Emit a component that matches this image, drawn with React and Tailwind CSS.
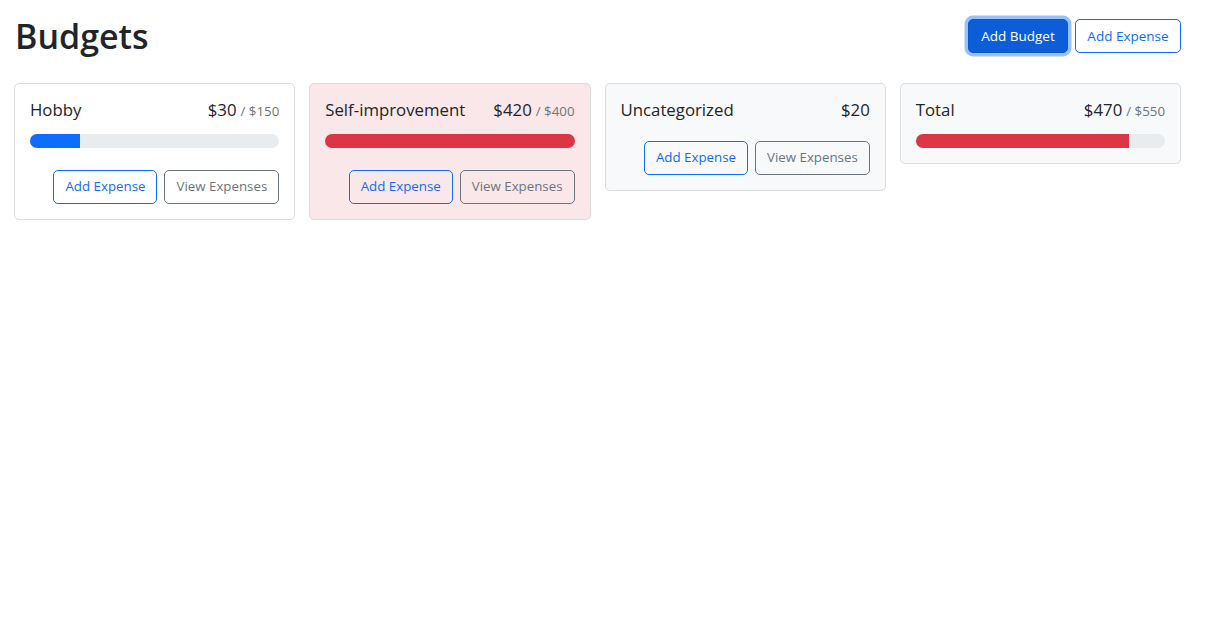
import React from "react";

const budgets = [
  { name: "Hobby", amount: 30, max: 150, bg: "bg-white" },
  { name: "Self-improvement", amount: 420, max: 400, bg: "bg-[#f9e7e9]" },
  { name: "Uncategorized", amount: 20, max: null, bg: "bg-[#f8f9fa]" },
  { name: "Total", amount: 470, max: 550, bg: "bg-[#f8f9fa]", hideButtons: true },
];

function Card({ name, amount, max, bg, hideButtons }) {
  const pct = max ? Math.min(100, (amount / max) * 100) : 0;
  const variant = max && amount / max >= 0.75 ? "bg-[#dc3545]" : max && amount / max >= 0.5 ? "bg-[#ffc107]" : "bg-[#0d6efd]";
  return (
    <div className={`${bg} border border-[#dcdcdc] rounded-[5px] px-[15px] pt-[13px] pb-[15px]`}>
      <div className="flex justify-between items-baseline h-[24px] mb-[13px]">
        <div className="mr-2 text-[16.8px] text-[#212529]">{name}</div>
        <div className="flex items-baseline text-[16.8px] text-[#212529]">
          ${amount}
          {max && <span className="text-[13.3px] text-[#6c757d] ml-[4px]">/ ${max}</span>}
        </div>
      </div>
      {max && (
        <div className="h-[14px] rounded-full bg-[#e9ecef] overflow-hidden flex">
          <div className={`${variant} h-full`} style={{ width: `${pct}%` }} />
        </div>
      )}
      {!hideButtons && (
        <div className={`flex items-center gap-[7px] ${max ? "mt-[22px]" : "mt-[20px]"}`}>
          <button className="ml-auto h-[34px] px-[11px] rounded-[5px] border border-[#0d6efd] text-[#0d6efd] text-[13.3px] bg-transparent">
            Add Expense
          </button>
          <button className="h-[34px] px-[11px] rounded-[5px] border border-[#6c757d] text-[#6c757d] text-[13.3px] bg-transparent">
            View Expenses
          </button>
        </div>
      )}
    </div>
  );
}

export default function App() {
  return (
    <div className="bg-white min-h-[626px] font-['Open_Sans',sans-serif] text-[#212529]">
      <div className="ml-[14px] w-[1167px] pt-[15px]">
        <div className="flex items-center h-[42px] mb-[26px]">
          <h1 className="mr-auto text-[34px] font-semibold leading-[42px] pl-[1px] text-[#212529]">Budgets</h1>
          <button className="h-[34px] w-[100px] rounded-[5px] bg-[#0b5ed7] text-white text-[13.5px] ring-[3.5px] ring-[#98c1fe] border border-[#0a58ca]">
            Add Budget
          </button>
          <button className="ml-[7px] h-[34px] w-[106px] rounded-[5px] border border-[#0d6efd] text-[#0d6efd] text-[13.5px] bg-white">
            Add Expense
          </button>
        </div>
        <div className="grid grid-cols-4 gap-[14px] items-start">
          {budgets.map((b) => (
            <Card key={b.name} {...b} />
          ))}
        </div>
      </div>
    </div>
  );
}
